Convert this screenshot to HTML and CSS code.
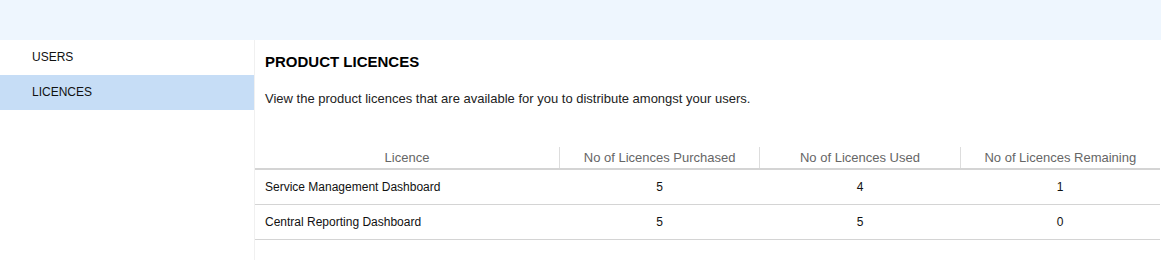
FILE: index.html
```html
<!DOCTYPE html>
<html lang="en">
<head>
  <meta charset="UTF-8" />
  <title>Product Licences</title>
  <link rel="stylesheet" href="styles.css">
</head>
<body>
  <header class="topbar"></header>
  <div class="layout">
    <nav class="sidebar">
      <a class="nav-item" href="#">USERS</a>
      <a class="nav-item active" href="#">LICENCES</a>
    </nav>
    <main class="content">
      <h1 class="title">PRODUCT LICENCES</h1>
      <p class="intro">View the product licences that are available for you to distribute amongst your users.</p>
      <table class="licences">
        <thead>
          <tr>
            <th class="col-name">Licence</th>
            <th>No of Licences Purchased</th>
            <th>No of Licences Used</th>
            <th>No of Licences Remaining</th>
          </tr>
        </thead>
        <tbody>
          <tr>
            <td class="name">Service Management Dashboard</td>
            <td>5</td>
            <td>4</td>
            <td>1</td>
          </tr>
          <tr>
            <td class="name">Central Reporting Dashboard</td>
            <td>5</td>
            <td>5</td>
            <td>0</td>
          </tr>
        </tbody>
      </table>
    </main>
  </div>
</body>
</html>
```

FILE: styles.css
```css
body {
  margin: 0;
  font-family: "Liberation Sans", Arial, sans-serif;
  font-size: 12px;
  color: #111;
  background: #fff;
}
.topbar {
  height: 40px;
  background: #eef6fe;
}
.layout {
  display: flex;
  height: 220px;
}
.sidebar {
  width: 254px;
  border-right: 1px solid #f0f0f0;
  display: flex;
  flex-direction: column;
}
.nav-item {
  display: block;
  height: 35px;
  line-height: 35px;
  padding-left: 32px;
  color: #111;
  text-decoration: none;
  font-size: 12px;
}
.nav-item.active {
  background: #c6ddf6;
}
.content {
  flex: 1;
  padding-right: 1px;
}
.title {
  margin: 12px 10px 0;
  font-size: 15px;
  line-height: 20px;
  font-weight: bold;
  color: #000;
}
.intro {
  margin: 20px 10px 0;
  font-size: 13px;
  line-height: 14px;
  color: #222;
}
.licences {
  margin-top: 41px;
  width: 905px;
  border-collapse: collapse;
}
.licences th {
  width: 200px;
  height: 21px;
  padding: 0;
  font-weight: normal;
  font-size: 13px;
  color: #666;
  text-align: center;
  border-right: 1px solid #ddd;
  border-bottom: 2px solid #d4d4d4;
}
.licences th:last-child {
  border-right: none;
}
.licences th.col-name {
  width: 305px;
}
.licences td {
  height: 34px;
  padding: 0;
  text-align: center;
  border-bottom: 1px solid #d4d4d4;
}
.licences td.name {
  text-align: left;
  padding-left: 10px;
}
```
